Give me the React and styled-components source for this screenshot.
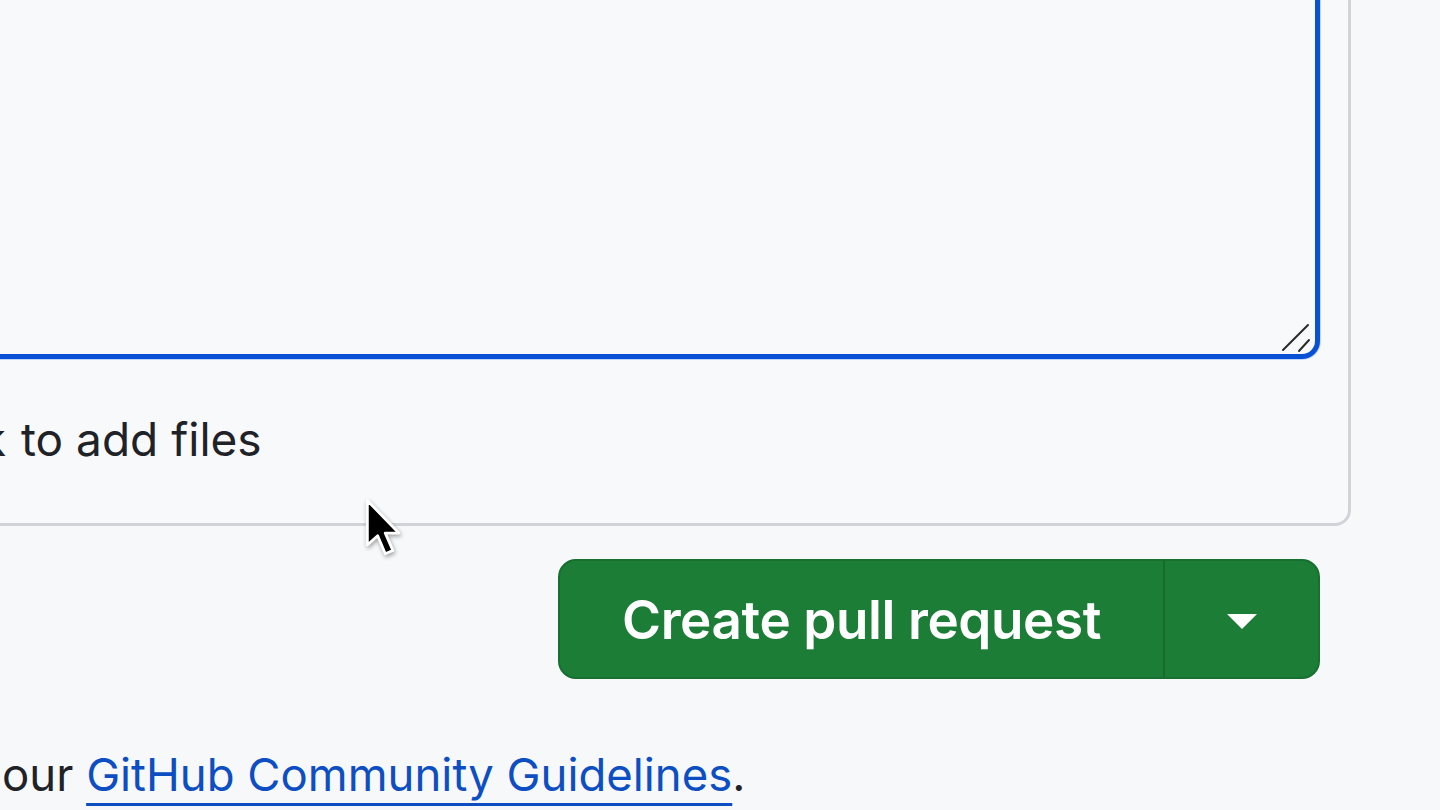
import React from "react";
import styled, { createGlobalStyle } from "styled-components";

const Global = createGlobalStyle`
  html, body { margin: 0; padding: 0; background: #f7f8fa; }
  body { font-family: Inter, "Noto Sans", sans-serif; color: #1f2328; }
  * { box-sizing: border-box; }
`;

const Viewport = styled.div`
  width: 1440px;
  height: 810px;
  overflow: hidden;
  position: relative;
  background: #f7f8fa;
`;

const Column = styled.div`
  display: flex;
  flex-direction: column;
  margin-left: -700px;
  margin-top: -100px;
  width: 2140px;
`;

const CommentBox = styled.div`
  margin-right: 89px;
  border: 3px solid #d0d4d9;
  border-radius: 16px;
  padding: 20px 28px 0 28px;
  background: #f8f9fb;
`;

const EditorWrap = styled.div`
  position: relative;
`;

const Editor = styled.div`
  height: 436px;
  border: 5px solid #0a50d4;
  border-radius: 18px;
  background: #f8f9fb;
  box-shadow: 0 0 0 1px rgba(90, 150, 255, 0.35);
`;

const Grip = styled.svg`
  position: absolute;
  right: 8px;
  bottom: 6px;
  width: 32px;
  height: 32px;
`;

const FooterLine = styled.div`
  display: flex;
  align-items: baseline;
  font-size: 46px;
  line-height: 66px;
  padding: 47px 0 51px 0;
  margin-left: -31px;
  white-space: nowrap;
  color: #1f2328;
`;

const Lead = styled.div`
  display: flex;
  justify-content: flex-end;
  flex: none;
  width: ${(p) => p.$w}px;
  white-space: nowrap;
`;

const Rest = styled.span`
  padding-left: ${(p) => p.$gap}px;
`;

const ActionRow = styled.div`
  display: flex;
  justify-content: flex-end;
  padding-right: 120px;
  margin-top: 33px;
`;

const SplitButton = styled.div`
  display: flex;
  height: 120px;
  border-radius: 18px;
  overflow: hidden;
  background: #1b7d36;
  border: 2px solid #17702f;
`;

const MainButton = styled.div`
  width: 603px;
  display: flex;
  align-items: center;
  justify-content: center;
  color: #fff;
  font-weight: 600;
  font-size: 53px;
  letter-spacing: -0.4px;
  padding-top: 2px;
`;

const CaretButton = styled.div`
  width: 155px;
  display: flex;
  align-items: center;
  justify-content: center;
  border-left: 2px solid #166b2d;
  padding-top: 4px;
`;

const Guidelines = styled.div`
  display: flex;
  align-items: baseline;
  margin-top: 68px;
  font-size: 45.5px;
  line-height: 56px;
  white-space: nowrap;
  color: #1f2328;
`;

const Link = styled.a`
  color: #0d4fc2;
  text-decoration: underline;
  text-decoration-thickness: 3px;
  text-underline-offset: 12px;
  text-decoration-color: #0d4fc2;
`;

const Cursor = styled.svg`
  position: absolute;
  left: 363px;
  top: 497px;
  width: 50px;
  height: 70px;
  filter: drop-shadow(1px 2px 2px rgba(0, 0, 0, 0.35));
`;

export default function App() {
  return (
    <>
      <Global />
      <Viewport>
        <Column>
          <CommentBox>
            <EditorWrap>
              <Editor />
              <Grip viewBox="0 0 32 32">
                <line x1="3" y1="29" x2="28" y2="4" stroke="#2b2b2b" strokeWidth="2" strokeLinecap="round" />
                <line x1="19" y1="30" x2="29" y2="19" stroke="#2b2b2b" strokeWidth="2" strokeLinecap="round" />
              </Grip>
            </EditorWrap>
            <FooterLine>
              <Lead $w={706}>Paste, drop, or click</Lead>
              <Rest $gap={15}>to add files</Rest>
            </FooterLine>
          </CommentBox>
          <ActionRow>
            <SplitButton>
              <MainButton>Create pull request</MainButton>
              <CaretButton>
                <svg width="32" height="17" viewBox="0 0 32 17">
                  <path d="M1 1 H31 L16 16 Z" fill="#fff" />
                </svg>
              </CaretButton>
            </SplitButton>
          </ActionRow>
          <Guidelines>
            <Lead $w={689}>Remember, contributions to this repository should follow</Lead>
            <Rest $gap={13}>
              our <Link href="#">GitHub Community Guidelines</Link>.
            </Rest>
          </Guidelines>
        </Column>
        <Cursor viewBox="0 0 46 64">
          <path
            d="M4 3 L4 44 L13.5 35.5 L20.5 52 L27.5 49 L20.5 33 L33 33 Z"
            fill="#000"
            stroke="#fff"
            strokeWidth="2.6"
            strokeLinejoin="round"
          />
        </Cursor>
      </Viewport>
    </>
  );
}
